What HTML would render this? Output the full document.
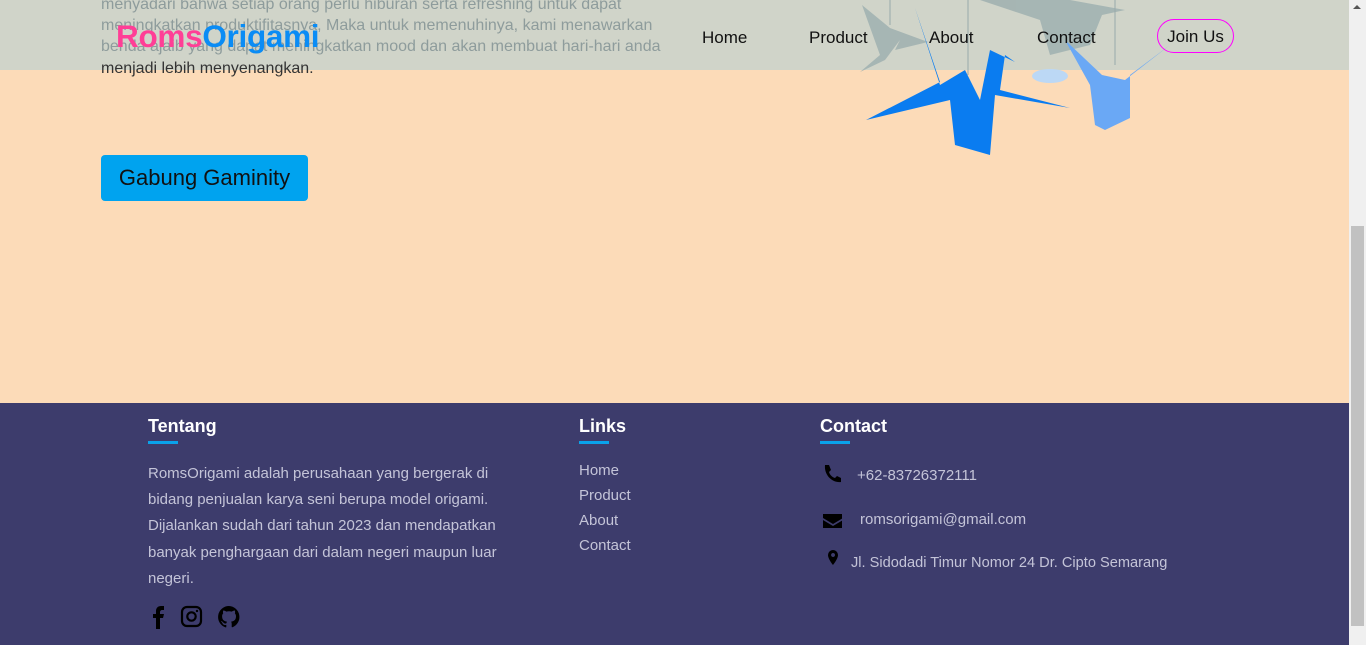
<!DOCTYPE html>
<html><head><meta charset="utf-8"><style>
*{margin:0;padding:0;box-sizing:border-box}
body{width:1366px;height:645px;overflow:hidden;background:#fcdbb8;font-family:"Liberation Sans",sans-serif;position:relative}
.nav{position:absolute;left:0;top:0;width:1349px;height:70px;background:#d0d4c9}
.p{position:absolute;left:101px;font-size:16px;color:#8e9c9c;white-space:nowrap}
.logo{position:absolute;left:116px;top:18px;font-size:31.5px;font-weight:bold;letter-spacing:-0.3px}
.menu{position:absolute;top:28px;font-size:17px;color:#111}
.join{position:absolute;left:1157px;top:19px;width:77px;height:34px;border:1px solid #f0f;border-radius:17px;font-size:17px;text-align:center;line-height:33px;color:#111}
.btn{position:absolute;left:101px;top:155px;width:207px;height:46px;background:#00a3ef;border-radius:4px;font-size:22px;color:#111;text-align:center;line-height:45px}
.foot{position:absolute;left:0;top:403px;width:1349px;height:242px;background:#3d3c6c;color:#c4c4d8}
.h{position:absolute;top:13px;font-size:18px;font-weight:bold;color:#fff}
.h:after{content:"";position:absolute;left:0;top:25px;width:30px;height:3px;background:#0aa2ea}
.t{position:absolute;left:148px;top:58px;width:360px;font-size:15px;line-height:26.2px}
.l{position:absolute;left:579px;font-size:15px}
.c{position:absolute;font-size:15px}
.sb{position:absolute;left:1349px;top:0;width:17px;height:645px;background:#f0f0f0}
</style></head><body>
<div class="nav"></div>
<div class="p" style="top:-4px">menyadari bahwa setiap orang perlu hiburan serta refreshing untuk dapat</div>
<div class="p" style="top:17px">meningkatkan produktifitasnya, Maka untuk memenuhinya, kami menawarkan</div>
<div class="p" style="top:38px">benda ajaib yang dapat meningkatkan mood dan akan membuat hari-hari anda</div>
<div class="p" style="top:60px;color:#333">menjadi lebih menyenangkan.</div>
<svg style="position:absolute;left:840px;top:0" width="420" height="160">
<g fill="#9fb0b0" opacity=".85"><polygon points="22,5 40,55 20,72 45,60 60,40 70,20 55,50 88,42 50,28"/><polygon points="140,0 200,20 210,55 250,45 262,15 285,10 230,0"/></g>
<g stroke="#9aa" stroke-width="1"><line x1="50" y1="0" x2="50" y2="25"/><line x1="128" y1="0" x2="128" y2="75"/><line x1="275" y1="0" x2="275" y2="65"/></g>
<ellipse cx="210" cy="76" rx="18" ry="7" fill="#bcd8f5"/>
<g fill="#0a7cf0"><polygon points="75,8 100,82 26,120 110,100 115,145 150,155 155,95 230,108 160,90 165,55 175,62 150,50 140,100 125,70 100,85"/></g>
<g fill="#6aa8f5"><polygon points="225,40 250,85 255,125 265,130 290,118 290,75 330,45 285,80 262,75"/></g>
</svg>
<div class="logo"><span style="color:#ff3e96">Roms</span><span style="color:#0a8cf5">Origami</span></div>
<div class="menu" style="left:702px">Home</div>
<div class="menu" style="left:809px">Product</div>
<div class="menu" style="left:929px">About</div>
<div class="menu" style="left:1037px">Contact</div>
<div class="join">Join Us</div>
<div class="btn">Gabung Gaminity</div>
<div class="foot">
<div class="h" style="left:148px">Tentang</div>
<div class="h" style="left:579px">Links</div>
<div class="h" style="left:820px">Contact</div>
<div class="t">RomsOrigami adalah perusahaan yang bergerak di bidang penjualan karya seni berupa model origami. Dijalankan sudah dari tahun 2023 dan mendapatkan banyak penghargaan dari dalam negeri maupun luar negeri.</div>
<div class="l" style="top:59px">Home</div>
<div class="l" style="top:84px">Product</div>
<div class="l" style="top:109px">About</div>
<div class="l" style="top:134px">Contact</div>
<svg style="position:absolute;left:822px;top:61px" width="20" height="120" fill="#000">
<path d="M3 1l4 0 2 5-2 2c1 3 3 5 6 6l2-2 4 2v4c-9 1-17-7-16-17z"/>
<path d="M1 50h20v4l-10 6-10-6zM1 56l10 6 10-6v8H1z"/>
<path d="M6 91a5 5 0 0 1 10 0c0 4-5 10-5 10s-5-6-5-10zM11 89a2 2 0 1 0 .1 0z" fill-rule="evenodd"/>
</svg>
<div class="c" style="left:857px;top:64px">+62-83726372111</div>
<div class="c" style="left:860px;top:108px">romsorigami@gmail.com</div>
<div class="c" style="left:851px;top:152px;font-size:14.6px">Jl. Sidodadi Timur Nomor 24 Dr. Cipto Semarang</div>
<svg style="position:absolute;left:150px;top:202px" width="92" height="24">
<path d="M6 24V13H3V9h3V6c0-3 2-5 5-5h3v4h-2c-1 0-2 1-2 2v2h4l-1 4h-3v11z" fill="#000"/>
<rect x="32" y="2" width="19" height="19" rx="5" fill="none" stroke="#000" stroke-width="2.2"/>
<circle cx="41.5" cy="11.5" r="4.2" fill="none" stroke="#000" stroke-width="2.2"/><circle cx="47" cy="6" r="1.2"/>
<path d="M79 1a11 11 0 0 0-3.5 21.4c.6.1.8-.2.8-.5v-2c-3 .7-3.7-1.4-3.7-1.4-.5-1.3-1.2-1.6-1.2-1.6-1-.7.1-.7.1-.7 1.1.1 1.700 1.1 1.7 1.1 1 1.7 2.6 1.2 3.2.9.1-.7.4-1.2.7-1.5-2.4-.3-5-1.2-5-5.4 0-1.2.4-2.2 1.1-2.9-.1-.3-.5-1.4.1-2.9 0 0 .9-.3 3 1.1a10 10 0 0 1 5.5 0c2.1-1.4 3-1.1 3-1.1.6 1.5.2 2.6.1 2.9.7.7 1.1 1.7 1.1 2.9 0 4.2-2.6 5.1-5 5.4.4.3.7 1 .7 2v3c0 .3.2.6.8.5A11 11 0 0 0 79 1z" fill="#000"/>
</svg>
</div>
<div class="sb"><div style="position:absolute;left:2px;top:226px;width:13px;height:400px;background:#c1c1c1"></div>
<div style="position:absolute;left:4px;top:5px;border:4px solid transparent;border-bottom:4px solid #555;border-top:0;width:0"></div></div>
</body></html>
